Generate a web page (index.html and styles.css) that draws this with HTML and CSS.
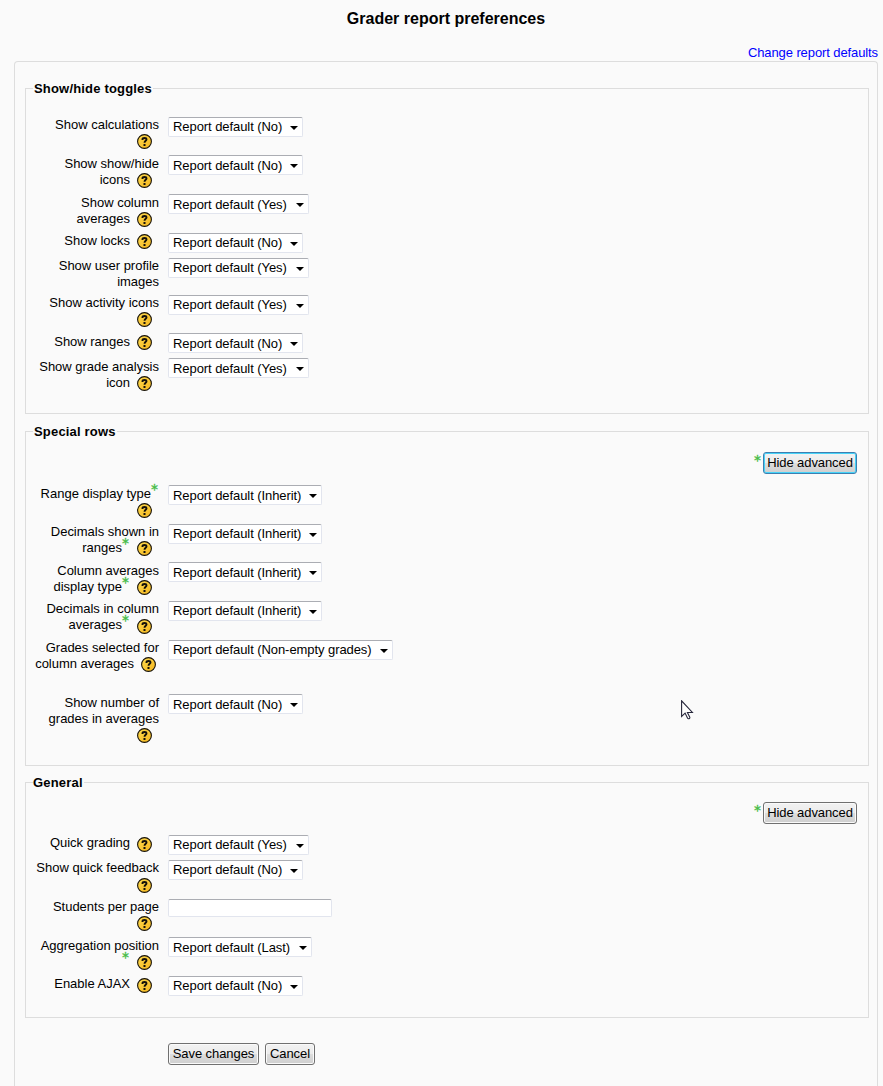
FILE: index.html
```
<!DOCTYPE html>
<html lang="en">
<head>
<meta charset="utf-8">
<title>Grader report preferences</title>
<link rel="stylesheet" href="styles.css">
</head>
<body>
<svg class="defs" width="0" height="0" aria-hidden="true">
  <defs>
    <linearGradient id="gold" x1="0" y1="0" x2="1" y2="1"><stop offset="0" stop-color="#ffdc50"/><stop offset="1" stop-color="#f4b41c"/></linearGradient>
    <symbol id="help" viewBox="0 0 15 15">
      <circle cx="7.5" cy="7.5" r="6.9" fill="url(#gold)" stroke="#15110a" stroke-width="1.1"/>
      <path d="M5.5 6V5.2C5.5 4.2 6.2 4 7.5 4S9.5 4.4 9.5 5.5C9.5 6.9 7.6 6.8 7.5 8.8" fill="none" stroke="#15110a" stroke-width="1.9"/>
      <path d="M6.5 10h2v2h-2z" fill="#15110a"/>
    </symbol>
  </defs>
</svg>
<h1 class="title">Grader report preferences</h1>
<div class="links"><a class="link" href="#">Change report defaults</a></div>
<form class="panel">
  <fieldset class="group group-toggles">
    <legend class="legend">Show/hide toggles</legend>
    <div class="row h38"><div class="label">Show calculations<br><svg class="help"><use href="#help"/></svg></div><div class="select no">Report default (No)</div></div>
    <div class="row low h39"><div class="label">Show show/hide<br>icons<svg class="help"><use href="#help"/></svg></div><div class="select no">Report default (No)</div></div>
    <div class="row low h39"><div class="label">Show column<br>averages<svg class="help"><use href="#help"/></svg></div><div class="select yes">Report default (Yes)</div></div>
    <div class="row h25"><div class="label">Show locks<svg class="help"><use href="#help"/></svg></div><div class="select no">Report default (No)</div></div>
    <div class="row h37"><div class="label">Show user profile<br>images</div><div class="select yes">Report default (Yes)</div></div>
    <div class="row h38"><div class="label">Show activity icons<br><svg class="help"><use href="#help"/></svg></div><div class="select yes">Report default (Yes)</div></div>
    <div class="row low h25"><div class="label">Show ranges<svg class="help"><use href="#help"/></svg></div><div class="select no">Report default (No)</div></div>
    <div class="row low h39"><div class="label">Show grade analysis<br>icon<svg class="help"><use href="#help"/></svg></div><div class="select yes">Report default (Yes)</div></div>
  </fieldset>

  <fieldset class="group group-rows">
    <legend class="legend">Special rows</legend>
    <div class="advanced"><span class="star">*</span><button type="button" class="button focused">Hide advanced</button></div>
    <div class="row low h39"><div class="label">Range display type<span class="star">*</span><br><svg class="help"><use href="#help"/></svg></div><div class="select inherit">Report default (Inherit)</div></div>
    <div class="row h38"><div class="label">Decimals shown in<br>ranges<span class="star">*</span><svg class="help"><use href="#help"/></svg></div><div class="select inherit">Report default (Inherit)</div></div>
    <div class="row low h39"><div class="label">Column averages<br>display type<span class="star">*</span><svg class="help"><use href="#help"/></svg></div><div class="select inherit">Report default (Inherit)</div></div>
    <div class="row h39"><div class="label">Decimals in column<br>averages<span class="star">*</span><svg class="help drop"><use href="#help"/></svg></div><div class="select inherit">Report default (Inherit)</div></div>
    <div class="row h54"><div class="label">Grades selected for<br>column averages<svg class="help near"><use href="#help"/></svg></div><div class="select nonempty">Report default (Non-empty grades)</div></div>
    <div class="row low h54"><div class="label">Show number of<br>grades in averages<br><svg class="help"><use href="#help"/></svg></div><div class="select no">Report default (No)</div></div>
  </fieldset>

  <fieldset class="group group-general">
    <legend class="legend">General</legend>
    <div class="advanced"><span class="star">*</span><button type="button" class="button">Hide advanced</button></div>
    <div class="row h25"><div class="label">Quick grading<svg class="help drop"><use href="#help"/></svg></div><div class="select yes">Report default (Yes)</div></div>
    <div class="row h39"><div class="label">Show quick feedback<br><svg class="help drop"><use href="#help"/></svg></div><div class="select no">Report default (No)</div></div>
    <div class="row h38"><div class="label">Students per page<br><svg class="help"><use href="#help"/></svg></div><input class="input" type="text" aria-label="Students per page"></div>
    <div class="row low h39"><div class="label">Aggregation position<br><span class="star">*</span><svg class="help"><use href="#help"/></svg></div><div class="select last">Report default (Last)</div></div>
    <div class="row h25"><div class="label">Enable AJAX<svg class="help drop"><use href="#help"/></svg></div><div class="select no">Report default (No)</div></div>
  </fieldset>
  <div class="actions"><button type="button" class="button save">Save changes</button><button type="button" class="button cancel">Cancel</button></div>
</form>
<svg class="cursor" width="13" height="20" viewBox="0 0 13 20"><path d="M.6.8v15.6l3.5-3.3 2.5 5.2c.6 1 2.6.2 2.2-1l-2.4-4.8h5z" fill="#fff" stroke="#25253a" stroke-width="1.1"/></svg>
</body>
</html>
```
FILE: styles.css
```
* { box-sizing: border-box; }
body {
  margin: 0;
  height: 1086px;
  overflow: hidden;
  background: #fafafa;
  color: #000;
  font: 13px/16px "Liberation Sans", Arial, sans-serif;
  letter-spacing: 0;
}
.defs { position: absolute; }
.title {
  margin: 0;
  padding: 9px 0 0 9px;
  height: 45px;
  text-align: center;
  font-size: 16px;
  line-height: 20px;
}
.links { height: 16px; padding-right: 5px; text-align: right; letter-spacing: -0.1px; }
.link { color: #00f; text-decoration: none; }
.panel {
  width: 864px;
  height: 1025px;
  margin-left: 14px;
  padding: 19px 9px 0 10px;
  border: 1px solid #ddd;
  border-bottom: 0;
  border-radius: 4px 4px 0 0;
}
.group {
  width: 844px;
  min-width: 0;
  margin: 0 0 10px;
  padding: 0 11px 0 7px;
  border: 1px solid #ddd;
}
.group-toggles { height: 333px; }
.group-rows { height: 342px; margin-bottom: 9px; }
.group-general { height: 243px; margin-bottom: 0; }
.legend { height: 15px; padding: 0 1px; line-height: 15px; font-weight: bold; letter-spacing: 0.18px; }
.group-general .legend { padding-left: 0; }
.group-toggles .row:first-of-type { margin-top: 21px; }
.advanced {
  display: flex;
  justify-content: flex-end;
  height: 33px;
  margin-top: 13px;
}
.group-general .advanced { margin-top: 12px; }
.row { display: flex; gap: 9px; }
.h25 { height: 25px; }
.h37 { height: 37px; }
.h38 { height: 38px; }
.h39 { height: 39px; }
.h54 { height: 54px; }
.label { width: 126px; text-align: right; white-space: nowrap; letter-spacing: -0.01px; }
.low .label { padding-top: 1px; }
.help {
  width: 15px;
  height: 15px;
  margin: 1px 7px -1px 7px;
  vertical-align: top;
}
.help.drop { margin: 2px 7px -2px 7px; }
.help.near { margin-right: 3px; }
.star {
  display: inline-block;
  width: 8px;
  height: 10px;
  margin-top: -3px;
  color: #44bb44;
  font: 14px/13px "DejaVu Sans", sans-serif;
  -webkit-text-stroke: 0.3px #44bb44;
  text-align: left;
  vertical-align: top;
}
.advanced .star { margin: 2px 1px 0 0; }
.select {
  position: relative;
  height: 20px;
  padding-left: 4px;
  border: 1px solid #e2e5ee;
  border-top-color: #abadb3;
  border-radius: 2px;
  background: #fff;
  line-height: 18px;
  letter-spacing: -0.07px;
  white-space: nowrap;
}
.low .select { line-height: 20px; }
.select::after {
  content: "";
  position: absolute;
  right: 4px;
  top: 8px;
  border: 4px solid transparent;
  border-top-color: #000;
  border-bottom: 0;
}
.no { width: 135px; }
.yes { width: 141px; }
.inherit { width: 154px; }
.nonempty { width: 225px; }
.last { width: 144px; }
.input {
  width: 164px;
  height: 18px;
  border: 1px solid #e2e5ee;
  border-top-color: #abadb3;
  border-radius: 2px;
  background: #fff;
}
.button {
  width: 94px;
  height: 22px;
  padding: 0;
  border: 1px solid #707070;
  border-radius: 3px;
  background: linear-gradient(#f2f2f2, #ebebeb 50%, #dddddd 50%, #cfcfcf);
  box-shadow: inset 0 0 0 1px #fafafa;
  color: #000;
  font: inherit;
  letter-spacing: -0.08px;
}
.focused { border-color: #3c7fb1; box-shadow: inset 0 0 0 1px #46d3f8; }
.actions { display: flex; gap: 6px; padding: 25px 0 0 143px; }
.save { width: 91px; }
.cancel { width: 50px; }
.cursor { position: absolute; left: 681px; top: 700px; }
```
